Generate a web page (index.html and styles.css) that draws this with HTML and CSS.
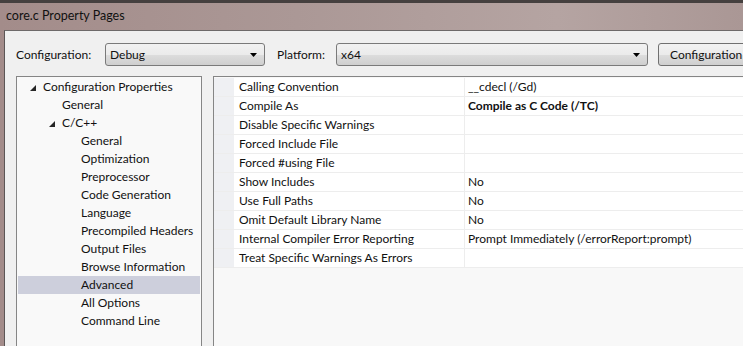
FILE: index.html
```html
<!DOCTYPE html>
<html lang="en">
<head>
  <meta charset="UTF-8" />
  <title>core.c Property Pages</title>
  <link rel="stylesheet" href="styles.css">
</head>
<body>
  <div class="window">
    <div class="titlebar">core.c Property Pages</div>

    <div class="client">
      <div class="toolbar">
        <span class="label label-config">Configuration:</span>
        <div class="combo combo-config">
          <span>Debug</span>
          <svg class="arrow" width="7" height="4" viewBox="0 0 7 4"><polygon points="0,0 7,0 3.5,4" fill="#000"/></svg>
        </div>
        <span class="label label-platform">Platform:</span>
        <div class="combo combo-platform">
          <span>x64</span>
          <svg class="arrow" width="7" height="4" viewBox="0 0 7 4"><polygon points="0,0 7,0 3.5,4" fill="#000"/></svg>
        </div>
        <div class="button">Configuration Manager...</div>
      </div>

      <div class="panes">
        <!-- left: property tree -->
        <div class="tree">
          <div class="node lvl0"><svg class="twist" width="6" height="6" viewBox="0 0 6 6"><polygon points="6,0 6,6 0,6" fill="#262626"/></svg>Configuration Properties</div>
          <div class="node lvl1">General</div>
          <div class="node lvl1 open"><svg class="twist" width="6" height="6" viewBox="0 0 6 6"><polygon points="6,0 6,6 0,6" fill="#262626"/></svg>C/C++</div>
          <div class="node lvl2">General</div>
          <div class="node lvl2">Optimization</div>
          <div class="node lvl2">Preprocessor</div>
          <div class="node lvl2">Code Generation</div>
          <div class="node lvl2">Language</div>
          <div class="node lvl2">Precompiled Headers</div>
          <div class="node lvl2">Output Files</div>
          <div class="node lvl2">Browse Information</div>
          <div class="node lvl2 selected">Advanced</div>
          <div class="node lvl2">All Options</div>
          <div class="node lvl2">Command Line</div>
        </div>

        <!-- right: property grid -->
        <div class="grid">
          <div class="row"><div class="gutter"></div><div class="name">Calling Convention</div><div class="value">__cdecl (/Gd)</div></div>
          <div class="row"><div class="gutter"></div><div class="name">Compile As</div><div class="value bold">Compile as C Code (/TC)</div></div>
          <div class="row"><div class="gutter"></div><div class="name">Disable Specific Warnings</div><div class="value"></div></div>
          <div class="row"><div class="gutter"></div><div class="name">Forced Include File</div><div class="value"></div></div>
          <div class="row"><div class="gutter"></div><div class="name">Forced #using File</div><div class="value"></div></div>
          <div class="row"><div class="gutter"></div><div class="name">Show Includes</div><div class="value">No</div></div>
          <div class="row"><div class="gutter"></div><div class="name">Use Full Paths</div><div class="value">No</div></div>
          <div class="row"><div class="gutter"></div><div class="name">Omit Default Library Name</div><div class="value">No</div></div>
          <div class="row"><div class="gutter"></div><div class="name">Internal Compiler Error Reporting</div><div class="value">Prompt Immediately (/errorReport:prompt)</div></div>
          <div class="row"><div class="gutter"></div><div class="name">Treat Specific Warnings As Errors</div><div class="value"></div></div>
        </div>
      </div>
    </div>
  </div>
</body>
</html>
```

FILE: styles.css
```css
html, body {
  margin: 0;
  padding: 0;
  width: 743px;
  height: 346px;
  overflow: hidden;
}

body {
  font-family: "Lato", "Liberation Sans", sans-serif;
  font-size: 12px;
  color: #111;
  background: #a8928f;
}

.window {
  width: 743px;
  height: 346px;
  display: flex;
  flex-direction: column;
  background: linear-gradient(90deg, #a38c8a 0%, #ab9896 40%, #b5a4a2 75%, #aa9795 100%);
}

.titlebar {
  height: 27px;
  border-top: 3px solid #45403f;
  padding-left: 6px;
  line-height: 26px;
  font-size: 12.5px;
  color: #111;
  flex-shrink: 0;
}

.client {
  flex: 1;
  margin-left: 4px;
  border-left: 1px solid #5c5656;
  border-top: 1px solid #6e6a6a;
  background: #f0f0f0;
  padding: 12px 0 0 11px;
  overflow: hidden;
}

/* top row with configuration / platform */
.toolbar {
  display: flex;
  align-items: center;
  height: 23px;
  white-space: nowrap;
}

.toolbar > * {
  flex-shrink: 0;
}

.label-config {
  width: 89px;
}

.label-platform {
  margin-left: 12px;
  width: 59px;
}

.combo {
  box-sizing: border-box;
  height: 23px;
  border: 1px solid #7a7a7a;
  border-radius: 3px;
  background: linear-gradient(#f2f2f2 0%, #ebebeb 50%, #dddddd 51%, #cfcfcf 100%);
  display: flex;
  align-items: center;
  justify-content: space-between;
  padding: 0 7px 0 4px;
}

.combo-config {
  width: 160px;
}

.combo-platform {
  width: 312px;
}

.button {
  box-sizing: border-box;
  height: 23px;
  margin-left: 10px;
  padding: 0 11px;
  border: 1px solid #707070;
  border-radius: 3px;
  background: linear-gradient(#f2f2f2 0%, #ebebeb 50%, #dddddd 51%, #cfcfcf 100%);
  line-height: 21px;
  width: 150px;
}

.panes {
  display: flex;
  gap: 11px;
  margin-top: 10px;
  height: 300px;
}

/* tree */
.tree {
  width: 184px;
  flex-shrink: 0;
  border: 1px solid #858585;
  background: #f9f9f9;
  padding-top: 1px;
}

.node {
  height: 18px;
  line-height: 18px;
  margin: 0 1px;
  white-space: nowrap;
  position: relative;
}

.lvl0 { padding-left: 25px; }
.lvl1 { padding-left: 44px; }
.lvl2 { padding-left: 63px; }

.twist {
  position: absolute;
  top: 7px;
}

.lvl0 .twist { left: 12px; }
.lvl1 .twist { left: 31px; }

.selected {
  background: #cdcfdc;
}

/* grid */
.grid {
  flex: 1;
  border: 1px solid #858585;
  border-right: none;
  background: #f8f8f8;
  padding-top: 1px;
}

.row {
  display: flex;
  height: 18px;
  line-height: 18px;
  border-bottom: 1px solid #ededed;
  white-space: nowrap;
}

.gutter {
  width: 20px;
  flex-shrink: 0;
  background: #eff0f3;
}

.name {
  width: 225px;
  flex-shrink: 0;
  padding-left: 5px;
  background: #fff;
  border-right: 1px solid #ededed;
}

.value {
  flex: 1;
  padding-left: 3px;
  background: #fff;
}

.bold {
  font-weight: bold;
}
```
